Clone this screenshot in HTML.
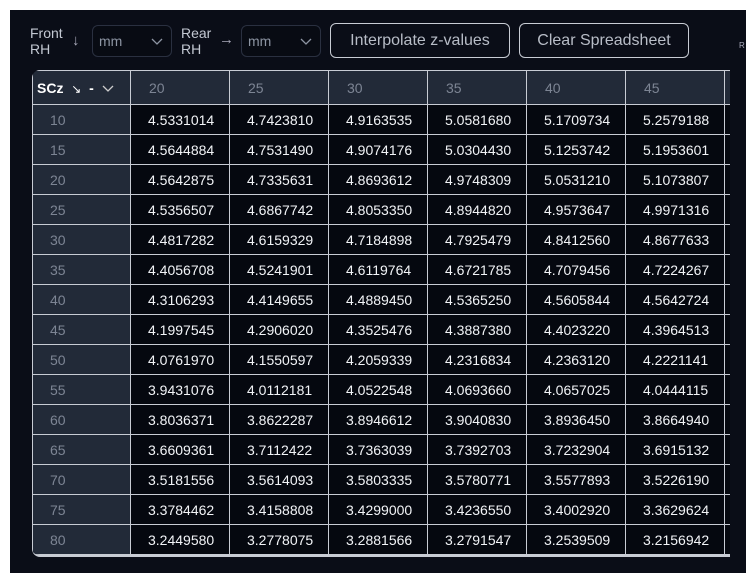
<!DOCTYPE html><html><head><style>
body{margin:0;background:#fff;width:756px;height:583px;overflow:hidden;font-family:"Liberation Sans",sans-serif}
.panel{position:absolute;left:10px;top:10px;width:736px;height:563px;background:#0a0d17}
.lbl{position:absolute;color:#c3c8d2;font-size:14px;line-height:16px}
.arr{position:absolute;color:#aab;font-size:15px}
.sel{position:absolute;top:25px;width:80px;height:32px;border:1px solid #2a3040;border-radius:6px;background:#080b13;color:#8d95a3;font-size:14px;line-height:30px;box-sizing:border-box;padding-left:6px}
.sel svg{position:absolute;right:8px;top:12px}
.btn{position:absolute;top:23px;height:35px;border:1px solid #c8ccd4;border-radius:6px;color:#b8bdc7;font-size:16px;line-height:33px;text-align:center;box-sizing:border-box}
.tw{position:absolute;left:32px;top:70px;width:698px;height:485px;overflow:hidden;border-top-left-radius:8px;border-bottom-left-radius:8px;border-bottom:2px solid #c8ccd4}
table{border-collapse:collapse;table-layout:fixed;font-size:14px;width:792px}
td{border:1px solid #c8ccd4;height:29px;padding:0 2px 0 17px;overflow:hidden;white-space:nowrap;color:#f2f4f7;background:#05080f}
tr:first-child td{height:33px;background:#222a38;color:#7d8594;padding-left:18px}
td:first-child{background:#222a38;color:#7d8594;padding-left:17px}
tr:first-child td:first-child{color:#fff;font-weight:bold;padding-left:4px}
</style></head><body>
<div class="panel"></div>
<div class="lbl" style="left:30px;top:25px">Front<br>RH</div>
<div class="arr" style="left:72px;top:32px">↓</div>
<div class="sel" style="left:92px">mm<svg width="12" height="8"><path d="M1 1l5 5 5-5" stroke="#8d95a3" fill="none" stroke-width="1.3"/></svg></div>
<div class="lbl" style="left:181px;top:25px">Rear<br>RH</div>
<div class="arr" style="left:219px;top:31px">→</div>
<div class="sel" style="left:241px">mm<svg width="12" height="8"><path d="M1 1l5 5 5-5" stroke="#8d95a3" fill="none" stroke-width="1.3"/></svg></div>
<div class="btn" style="left:330px;width:180px">Interpolate z-values</div>
<div class="btn" style="left:519px;width:170px">Clear Spreadsheet</div>
<div style="position:absolute;left:739px;top:41px;color:#aab;font-size:8px">R</div>
<div class="tw"><table>
<colgroup><col style="width:98px"><col style="width:99px"><col style="width:99px"><col style="width:99px"><col style="width:99px"><col style="width:99px"><col style="width:99px"><col style="width:99px"></colgroup>
<tr><td>SCz&nbsp; <span style="font-weight:normal;font-size:12px">↘</span>&nbsp; -&nbsp; <svg width="12" height="8"><path d="M1 1l5 5 5-5" stroke="#ccc" fill="none" stroke-width="1.3"/></svg></td><td>20</td><td>25</td><td>30</td><td>35</td><td>40</td><td>45</td><td></td></tr>
<tr><td>10</td><td>4.5331014</td><td>4.7423810</td><td>4.9163535</td><td>5.0581680</td><td>5.1709734</td><td>5.2579188</td><td></td></tr>
<tr><td>15</td><td>4.5644884</td><td>4.7531490</td><td>4.9074176</td><td>5.0304430</td><td>5.1253742</td><td>5.1953601</td><td></td></tr>
<tr><td>20</td><td>4.5642875</td><td>4.7335631</td><td>4.8693612</td><td>4.9748309</td><td>5.0531210</td><td>5.1073807</td><td></td></tr>
<tr><td>25</td><td>4.5356507</td><td>4.6867742</td><td>4.8053350</td><td>4.8944820</td><td>4.9573647</td><td>4.9971316</td><td></td></tr>
<tr><td>30</td><td>4.4817282</td><td>4.6159329</td><td>4.7184898</td><td>4.7925479</td><td>4.8412560</td><td>4.8677633</td><td></td></tr>
<tr><td>35</td><td>4.4056708</td><td>4.5241901</td><td>4.6119764</td><td>4.6721785</td><td>4.7079456</td><td>4.7224267</td><td></td></tr>
<tr><td>40</td><td>4.3106293</td><td>4.4149655</td><td>4.4889450</td><td>4.5365250</td><td>4.5605844</td><td>4.5642724</td><td></td></tr>
<tr><td>45</td><td>4.1997545</td><td>4.2906020</td><td>4.3525476</td><td>4.3887380</td><td>4.4023220</td><td>4.3964513</td><td></td></tr>
<tr><td>50</td><td>4.0761970</td><td>4.1550597</td><td>4.2059339</td><td>4.2316834</td><td>4.2363120</td><td>4.2221141</td><td></td></tr>
<tr><td>55</td><td>3.9431076</td><td>4.0112181</td><td>4.0522548</td><td>4.0693660</td><td>4.0657025</td><td>4.0444115</td><td></td></tr>
<tr><td>60</td><td>3.8036371</td><td>3.8622287</td><td>3.8946612</td><td>3.9040830</td><td>3.8936450</td><td>3.8664940</td><td></td></tr>
<tr><td>65</td><td>3.6609361</td><td>3.7112422</td><td>3.7363039</td><td>3.7392703</td><td>3.7232904</td><td>3.6915132</td><td></td></tr>
<tr><td>70</td><td>3.5181556</td><td>3.5614093</td><td>3.5803335</td><td>3.5780771</td><td>3.5577893</td><td>3.5226190</td><td></td></tr>
<tr><td>75</td><td>3.3784462</td><td>3.4158808</td><td>3.4299000</td><td>3.4236550</td><td>3.4002920</td><td>3.3629624</td><td></td></tr>
<tr><td>80</td><td>3.2449580</td><td>3.2778075</td><td>3.2881566</td><td>3.2791547</td><td>3.2539509</td><td>3.2156942</td><td></td></tr>
</table></div>
</body></html>
